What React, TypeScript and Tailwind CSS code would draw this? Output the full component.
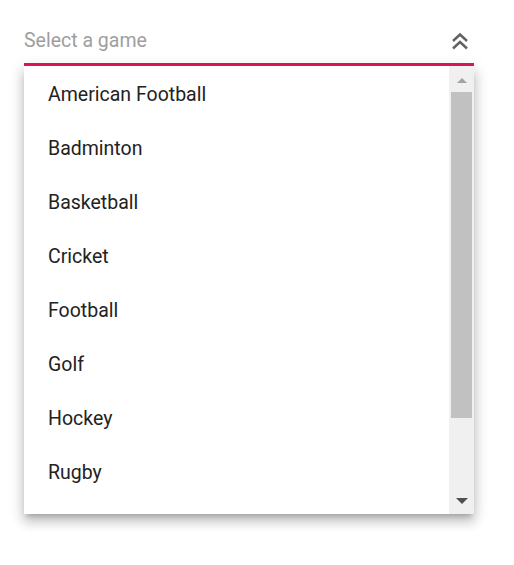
import React from "react";

const items = ["American Football", "Badminton", "Basketball", "Cricket", "Football", "Golf", "Hockey", "Rugby"];

export default function App() {
  return (
    <div className="w-[514px] h-[565px] bg-white" style={{ fontFamily: "Roboto, 'Noto Sans', sans-serif" }}>
      <div className="pl-[24px] pr-[40px] pt-[19px]">
        <div className="h-[47px] flex items-center justify-between border-b-[3px] border-[#e3165b] pb-[1px]">
          <span className="text-[19.5px] text-[#9e9e9e]">Select a game</span>
          <svg width="20" height="22" viewBox="0 0 20 22" className="mr-[4px] mt-[3px]">
            <path d="M3 10 L10 3.5 L17 10" fill="none" stroke="#616161" strokeWidth="2.4" />
            <path d="M3 17.5 L10 11 L17 17.5" fill="none" stroke="#616161" strokeWidth="2.4" />
          </svg>
        </div>
        <div className="h-[448px] flex bg-white shadow-[0_5px_5px_-3px_rgba(0,0,0,0.2),0_8px_10px_1px_rgba(0,0,0,0.14),0_3px_14px_2px_rgba(0,0,0,0.12)]">
          <div className="flex-1 overflow-hidden pt-[2px]">
            {items.map((it) => (
              <div key={it} className="h-[54px] flex items-center pl-[24px] text-[19.5px] text-[#222222]">
                {it}
              </div>
            ))}
          </div>
          <div className="w-[25px] bg-[#f0f0f0] flex flex-col items-center pl-[2px] pr-[2px]">
            <div className="h-[26px] w-full flex items-center justify-center pt-[2px]">
              <div className="w-0 h-0 border-l-[5px] border-r-[5px] border-b-[5px] border-l-transparent border-r-transparent border-b-[#a3a3a3]" />
            </div>
            <div className="h-[326px] w-full bg-[#c1c1c1]" />
            <div className="flex-1 w-full flex items-end justify-center pb-[10px]">
              <div className="w-0 h-0 border-l-[6px] border-r-[6px] border-t-[6px] border-l-transparent border-r-transparent border-t-[#505050]" />
            </div>
          </div>
        </div>
      </div>
    </div>
  );
}
